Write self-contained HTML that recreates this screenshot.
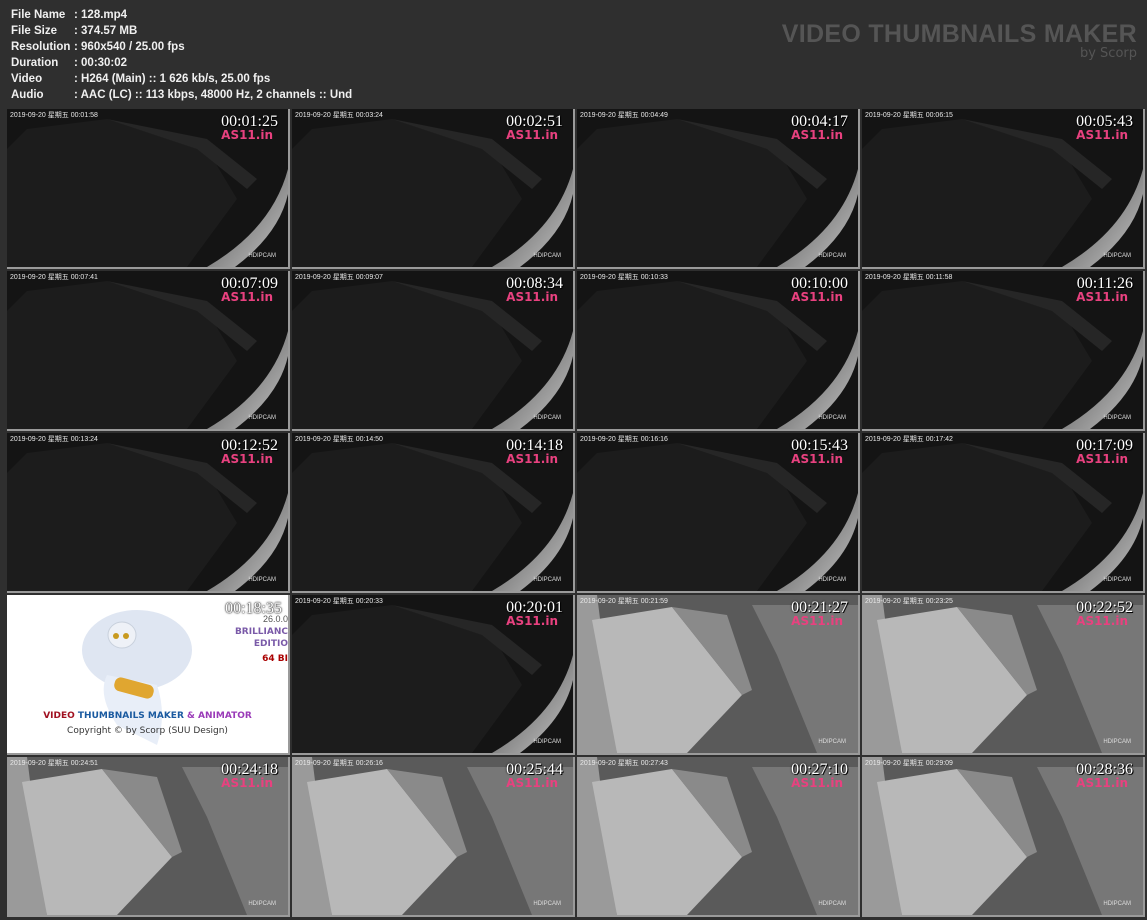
<!DOCTYPE html>
<html><head><meta charset="utf-8"><style>
*{margin:0;padding:0;box-sizing:border-box}
body{width:1147px;height:920px;background:#2f2f2f;position:relative;overflow:hidden;font-family:"Liberation Sans","Noto Sans CJK SC",sans-serif}
.info{position:absolute;left:11px;top:7px;color:#f0f0f0;font:bold 11.5px/16px "Liberation Sans",sans-serif}
.info div{white-space:nowrap}
.info span{display:inline-block;width:63px}
.logo{position:absolute;right:10px;top:21px;text-align:right;color:#555}
.logo b{display:block;font:bold 25px/27px "Liberation Sans",sans-serif;letter-spacing:0.3px}
.logo i{display:block;font:normal 13px/14px "DejaVu Sans",sans-serif;color:#555;margin-top:-1px}
.t{position:absolute;overflow:hidden;background:#151515;border-right:2px solid #9a9a9a;border-bottom:2px solid #9a9a9a;width:283px;height:160px}
.t svg{position:absolute;left:0;top:0}
.ts{position:absolute;left:3px;top:3px;color:#e8e8e8;font:7px/8px "Liberation Sans","Noto Sans CJK SC",sans-serif}
.tm{position:absolute;right:10px;top:4px;color:#fff;font:16px/17px "Liberation Serif",serif;text-shadow:0 0 2px #000,1px 1px 0 #000}
.as{position:absolute;right:15px;top:19px;color:#e8417f;font:bold 12px/14px "DejaVu Sans","Liberation Sans",sans-serif}
.hd{position:absolute;right:12px;bottom:8px;color:#ddd;font:6px/6px "Liberation Sans",sans-serif}
</style></head><body>
<div class="info">
<div><span>File Name</span>: 128.mp4</div>
<div><span>File Size</span>: 374.57 MB</div>
<div><span>Resolution</span>: 960x540 / 25.00 fps</div>
<div><span>Duration</span>: 00:30:02</div>
<div><span>Video</span>: H264 (Main) :: 1 626 kb/s, 25.00 fps</div>
<div><span>Audio</span>: AAC (LC) :: 113 kbps, 48000 Hz, 2 channels :: Und</div>
</div>
<div class="logo"><b>VIDEO THUMBNAILS MAKER</b><i>by Scorp</i></div>

<svg width="0" height="0" style="position:absolute"><defs>
<linearGradient id="edge" x1="0" y1="0" x2="1" y2="1"><stop offset="0" stop-color="#444"/><stop offset="1" stop-color="#c8c8c8"/></linearGradient>
<g id="dark">
<rect width="281" height="158" fill="#141414"/>
<polygon points="20,20 100,10 200,40 230,90 180,158 0,158 0,40" fill="#1c1c1c"/>
<polygon points="100,10 200,30 250,70 240,80 190,40" fill="#262626"/>
<path d="M281,60 Q265,120 200,158 L228,158 Q272,125 281,85 Z" fill="url(#edge)"/>
</g>
<g id="light">
<rect width="281" height="158" fill="#5a5a5a"/>
<polygon points="0,0 20,0 40,158 0,158" fill="#9a9a9a"/>
<polygon points="15,25 95,12 165,100 110,158 40,158" fill="#b8b8b8"/>
<polygon points="95,12 150,20 175,95 165,100" fill="#8a8a8a"/>
<polygon points="175,10 281,10 281,158 240,158 200,60" fill="#777"/>
</g>
</defs></svg>

<div id="g"></div>
<script>
var ts=["00:01:25","00:02:51","00:04:17","00:05:43","00:07:09","00:08:34","00:10:00","00:11:26","00:12:52","00:14:18","00:15:43","00:17:09","00:18:35","00:20:01","00:21:27","00:22:52","00:24:18","00:25:44","00:27:10","00:28:36"];
var st=["00:01:58","00:03:24","00:04:49","00:06:15","00:07:41","00:09:07","00:10:33","00:11:58","00:13:24","00:14:50","00:16:16","00:17:42","","00:20:33","00:21:59","00:23:25","00:24:51","00:26:16","00:27:43","00:29:09"];
var h="";
for(var i=0;i<20;i++){
 var c=i%4,r=Math.floor(i/4),x=7+c*285,y=109+r*162;
 if(i==12){
  h+='<div class="t" style="left:'+x+'px;top:'+y+'px;background:#fff">'+
  '<svg width="281" height="158"><ellipse cx="130" cy="55" rx="55" ry="40" fill="#dfe6f2"/><ellipse cx="115" cy="40" rx="14" ry="13" fill="#eef1f7" stroke="#c8d0dc"/><circle cx="109" cy="41" r="3" fill="#c89a20"/><circle cx="119" cy="41" r="3" fill="#c89a20"/><path d="M100,80 Q90,100 110,130 L150,150 Q160,120 150,90Z" fill="#e8eef8"/><rect x="107" y="86" width="40" height="14" rx="6" fill="#e0a630" transform="rotate(15 127 93)"/></svg>'+
  '<div class="tm" style="right:6px;top:5px;color:#fff;text-shadow:0 0 1px #000,0 0 2px #000">00:18:35</div>'+
  '<div style="position:absolute;right:0;top:19px;font:9px/10px Liberation Sans;color:#555">26.0.0</div>'+
  '<div style="position:absolute;right:0;top:31px;font:bold 9px/12px DejaVu Sans;color:#7a5aa8;text-align:right">BRILLIANC<br>EDITIO</div>'+
  '<div style="position:absolute;right:0;top:59px;font:bold 9px/10px DejaVu Sans;color:#a00">64 BI</div>'+
  '<div style="position:absolute;left:0;width:281px;top:116px;text-align:center;font:bold 9px/10px DejaVu Sans"><span style="color:#a01020">VIDEO</span> <span style="color:#1a5aa0">THUMBNAILS MAKER</span> <span style="color:#9a3ab8">&amp; ANIMATOR</span></div>'+
  '<div style="position:absolute;left:0;width:281px;top:131px;text-align:center;font:9px/10px DejaVu Sans;color:#333">Copyright © by Scorp (SUU Design)</div></div>';
  continue;}
 var lt=(i==14||i==15||i>=16);
 h+='<div class="t" style="left:'+x+'px;top:'+y+'px"><svg width="281" height="158"><use href="#'+(lt?'light':'dark')+'"/></svg>'+
 '<div class="ts">2019-09-20 星期五 '+st[i]+'</div><div class="tm">'+ts[i]+'</div><div class="as">AS11.in</div><div class="hd">HDIPCAM</div></div>';
}
document.getElementById("g").innerHTML=h;
</script>
</body></html>
